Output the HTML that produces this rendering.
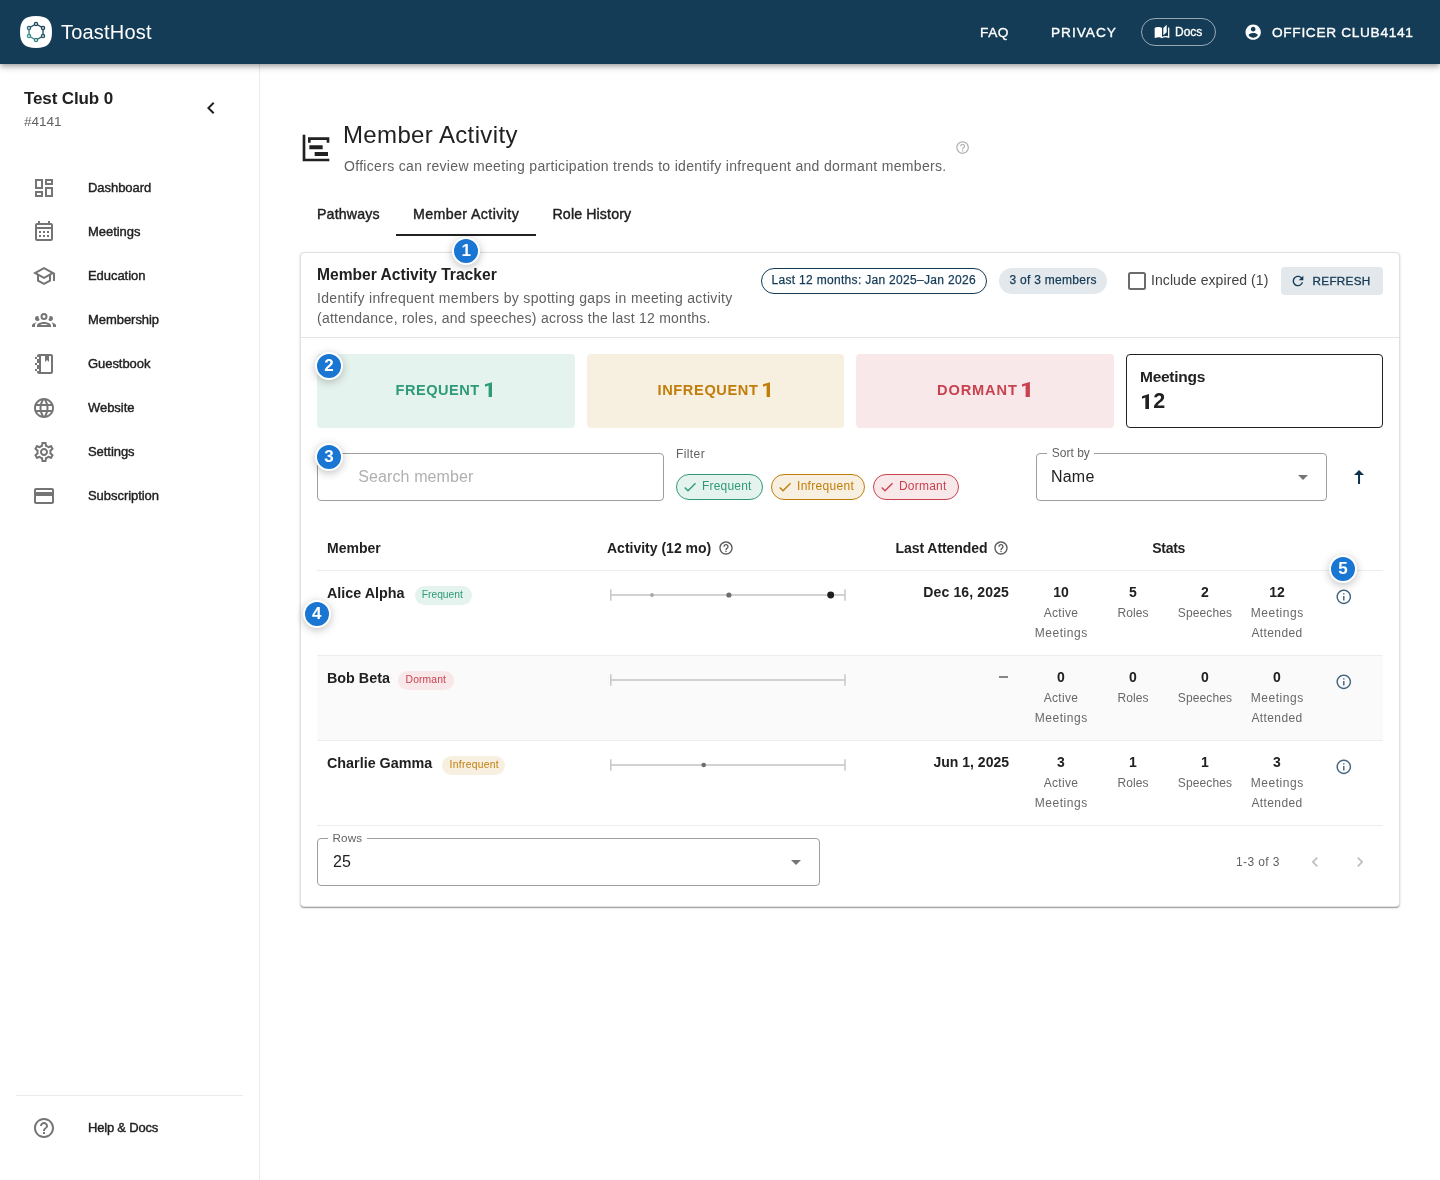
<!DOCTYPE html>
<html lang="en">
<head>
<meta charset="utf-8">
<title>ToastHost - Member Activity</title>
<style>
*{box-sizing:border-box;margin:0;padding:0}
html,body{width:1440px;height:1180px;overflow:hidden;background:#fff}
body{font-family:"Liberation Sans",sans-serif;color:#212121;position:relative;will-change:transform}
.abs{position:absolute;white-space:nowrap}
svg{display:block}
/* header */
#hdr{position:absolute;left:0;top:0;width:1440px;height:64px;background:#153c56;box-shadow:0 2px 4px -1px rgba(0,0,0,.2),0 4px 5px 0 rgba(0,0,0,.14),0 1px 10px 0 rgba(0,0,0,.12);z-index:5}
#logo{position:absolute;left:20px;top:16px;width:32px;height:32px}
#brand{left:61px;top:20px;font-size:20px;line-height:24px;color:#fff;letter-spacing:.2px}
.hnav{color:#fff;font-size:13.7px;line-height:20px;top:22.5px;letter-spacing:1.15px;font-weight:400;-webkit-text-stroke:.35px #fff}
#docs{position:absolute;left:1141px;top:18px;width:75px;height:28px;border:1px solid rgba(255,255,255,.55);border-radius:14px}
/* sidebar */
#side{position:absolute;left:0;top:64px;width:260px;height:1116px;border-right:1px solid #ebebeb;background:#fff}
.nav{position:absolute;left:88px;font-size:13px;line-height:20px;font-weight:400;color:#212121;white-space:nowrap;-webkit-text-stroke:.4px #212121;letter-spacing:-.05px}
.nico{position:absolute;left:32px;width:24px;height:24px;fill:#757575}

/* main */
#title{left:343px;top:120px;font-size:24px;line-height:30px;color:#212121;letter-spacing:.36px}
#sub{left:344px;top:156px;font-size:14px;line-height:20px;color:#616161;letter-spacing:.318px}
.tab{top:204px;font-size:14.2px;line-height:20px;color:#212121;-webkit-text-stroke:.4px #212121}
#card{position:absolute;left:300px;top:252px;width:1100px;height:655px;border:1px solid #e0e0e0;border-radius:4px;background:#fff;box-shadow:0 2px 1px -1px rgba(0,0,0,.2),0 1px 1px 0 rgba(0,0,0,.14),0 1px 3px 0 rgba(0,0,0,.12)}
.badge{position:absolute;width:28px;height:28px;border-radius:50%;background:#1976d2;border:2px solid #fff;box-shadow:0 2px 8px rgba(0,0,0,.25);color:#fff;font-size:17px;font-weight:700;line-height:24.500px;text-align:center;z-index:4}
.chip{position:absolute;white-space:nowrap;border-radius:13px;height:26px;font-size:12px;line-height:23px;text-align:center}

.tile{position:absolute;top:100px;height:74px;border-radius:4px;display:flex;align-items:center;justify-content:center;white-space:nowrap}
.tlab{top:126px;line-height:20px;font-size:14.600px;font-weight:700;letter-spacing:.62px}
.fchip{position:absolute;top:220px;height:26px;border-radius:13px;border:1px solid;font-size:12px;line-height:23px;white-space:nowrap;padding-left:25px;letter-spacing:.2px}
.fchip svg{position:absolute;left:4.600px;top:4px;width:16px;height:16px}
.field{position:absolute;border:1px solid #9e9e9e;border-radius:4px}
.flabel{position:absolute;top:-8px;left:10px;background:#fff;padding:0 4.500px;font-size:12px;line-height:14px;color:#616161;letter-spacing:.13px;white-space:nowrap}
.th{position:absolute;top:285px;font-size:14px;line-height:18px;font-weight:700;color:#212121;white-space:nowrap}
.row{position:absolute;left:16px;width:1066px;height:85px;border-top:1px solid #ededed}
.nm{position:absolute;left:10px;top:13px;font-size:14.350px;line-height:18px;font-weight:700;color:#212121;white-space:nowrap}
.st{position:absolute;height:19.500px;top:14.500px;border-radius:10px;font-size:10.300px;line-height:18.500px;padding:0 0 0 7.200px;white-space:nowrap}
.date{position:absolute;right:374px;top:12.400px;font-size:14px;line-height:18px;font-weight:700;color:#212121;white-space:nowrap}
.sv{position:absolute;top:12.400px;width:80px;text-align:center;font-size:14px;line-height:18px;font-weight:700;color:#212121}
.sl{position:absolute;top:32px;width:80px;text-align:center;font-size:12px;line-height:20px;color:#686868;letter-spacing:.3px}
.info{position:absolute;left:1017.500px;top:17px;width:17.600px;height:17.600px;fill:#456780}
.tl{position:absolute;left:292px;top:17px;width:238px;height:14px}
</style>
</head>
<body>
<!-- HEADER -->
<div id="hdr">
  <svg id="logo" viewBox="0 0 32 32">
    <defs><linearGradient id="lg" gradientUnits="userSpaceOnUse" x1="23" y1="9" x2="9" y2="23"><stop offset="0" stop-color="#173d57"/><stop offset=".55" stop-color="#2a5f6e"/><stop offset="1" stop-color="#3fa396"/></linearGradient></defs>
    <path d="M16 0C27.500 0 32 4.500 32 16S27.500 32 16 32 0 27.500 0 16 4.500 0 16 0Z" fill="#fff"/>
    <g stroke="url(#lg)" stroke-width="1.350" fill="#dfe6e8">
      <path d="M16 8 23 12 23 20 16 24 9 20 9 12Z" fill="none"/>
      <circle cx="16" cy="8" r="1.6"/><circle cx="23" cy="12" r="1.6"/><circle cx="23" cy="20" r="1.6"/><circle cx="16" cy="24" r="1.6"/><circle cx="9" cy="20" r="1.6"/><circle cx="9" cy="12" r="1.6"/>
    </g>
  </svg>
  <div id="brand" class="abs">ToastHost</div>
  <div class="abs hnav" style="left:980px;letter-spacing:.55px">FAQ</div>
  <div class="abs hnav" style="left:1051px;letter-spacing:.97px">PRIVACY</div>
  <div id="docs">
    <svg style="position:absolute;left:12px;top:5.300px;width:16px;height:16px;fill:#fff" viewBox="0 0 24 24"><path d="M19 1l-5 5v11l5-4.500V1zM1 6v14.650c0 .250.250.500.500.500.100 0 .150-.050.250-.050C3.100 20.450 5.050 20 6.500 20c1.950 0 4.050.400 5.500 1.500V6c-1.450-1.100-3.550-1.500-5.500-1.500S2.450 4.900 1 6zm22 13.500V6c-.600-.450-1.250-.750-2-1v13.500c-1.100-.350-2.300-.500-3.500-.500-1.700 0-4.150.650-5.500 1.500v2c1.350-.850 3.800-1.500 5.500-1.500 1.650 0 3.350.300 4.750 1.050.100.050.150.050.250.050.250 0 .500-.250.500-.500v-1.650z"/></svg>
    <div class="abs" style="left:33px;top:5px;font-size:12px;line-height:16px;color:#fff;-webkit-text-stroke:.3px #fff">Docs</div>
  </div>
  <svg style="position:absolute;left:1243.7px;top:22.8px;width:18.4px;height:18.4px;fill:#fff" viewBox="0 0 24 24"><path d="M12 2C6.480 2 2 6.480 2 12s4.480 10 10 10 10-4.480 10-10S17.520 2 12 2zm0 3c1.660 0 3 1.340 3 3s-1.340 3-3 3-3-1.340-3-3 1.340-3 3-3zm0 14.200c-2.500 0-4.710-1.280-6-3.220.030-1.990 4-3.080 6-3.080 1.990 0 5.970 1.090 6 3.080-1.290 1.940-3.500 3.220-6 3.220z"/></svg>
  <div class="abs hnav" style="left:1272px;letter-spacing:.67px">OFFICER CLUB4141</div>
</div>

<!-- SIDEBAR -->
<div id="side">
  <div class="abs" style="left:24px;top:24.500px;font-size:17px;line-height:20px;font-weight:700;color:#212121;letter-spacing:-.12px">Test Club 0</div>
  <div class="abs" style="left:24px;top:48.500px;font-size:13.500px;line-height:18px;color:#616161">#4141</div>
  <svg style="position:absolute;left:199px;top:32px;width:24px;height:24px;fill:#212121" viewBox="0 0 24 24"><path d="M15.410 7.410 14 6l-6 6 6 6 1.410-1.410L10.830 12z"/></svg>
  <svg class="nico" style="top:112px" viewBox="0 0 24 24"><path d="M19 5v2h-4V5h4M9 5v6H5V5h4m10 8v6h-4v-6h4M9 17v2H5v-2h4M21 3h-8v6h8V3zM11 3H3v10h8V3zm10 8h-8v10h8V11zm-10 4H3v6h8v-6z"/></svg>
  <div class="nav" style="top:114px">Dashboard</div>
  <svg class="nico" style="top:155px" viewBox="0 0 24 24"><path d="M19 4h-1V2h-2v2H8V2H6v2H5c-1.110 0-1.990.900-1.990 2L3 20c0 1.100.890 2 2 2h14c1.100 0 2-.900 2-2V6c0-1.100-.900-2-2-2zm0 16H5V10h14v10zm0-12H5V6h14v2zM9 14H7v-2h2v2zm4 0h-2v-2h2v2zm4 0h-2v-2h2v2zm-8 4H7v-2h2v2zm4 0h-2v-2h2v2zm4 0h-2v-2h2v2z"/></svg>
  <div class="nav" style="top:158px">Meetings</div>
  <svg class="nico" style="top:200px" viewBox="0 0 24 24"><path d="M12 3 1 9l4 2.180v6L12 21l7-3.820v-6l2-1.090V17h2V9L12 3zm6.820 6L12 12.720 5.180 9 12 5.280 18.820 9zM17 15.990l-5 2.730-5-2.730v-3.720L12 15l5-2.730v3.720z"/></svg>
  <div class="nav" style="top:202px">Education</div>
  <svg class="nico" style="top:244px" viewBox="0 0 24 24"><path d="M12,5A3.5,3.5 0 0,0 8.5,8.5A3.5,3.5 0 0,0 12,12A3.5,3.5 0 0,0 15.5,8.5A3.5,3.5 0 0,0 12,5M12,7A1.5,1.5 0 0,1 13.5,8.5A1.5,1.5 0 0,1 12,10A1.5,1.5 0 0,1 10.5,8.5A1.5,1.5 0 0,1 12,7M5.5,8A2.5,2.5 0 0,0 3,10.5C3,11.44 3.53,12.25 4.29,12.68C4.65,12.88 5.06,13 5.5,13C5.94,13 6.35,12.88 6.71,12.68C7.08,12.47 7.39,12.17 7.62,11.81C6.89,10.86 6.5,9.7 6.5,8.5C6.5,8.41 6.5,8.31 6.5,8.22C6.2,8.08 5.86,8 5.5,8M18.5,8C18.14,8 17.8,8.08 17.5,8.22C17.5,8.31 17.5,8.41 17.5,8.5C17.5,9.7 17.11,10.86 16.38,11.81C16.5,12 16.63,12.15 16.78,12.3C16.94,12.45 17.1,12.58 17.29,12.68C17.65,12.88 18.06,13 18.5,13C18.94,13 19.35,12.88 19.71,12.68C20.47,12.25 21,11.44 21,10.5A2.5,2.5 0 0,0 18.5,8M12,14C9.66,14 5,15.17 5,17.5V19H19V17.5C19,15.17 14.34,14 12,14M4.71,14.55C2.78,14.78 0,15.76 0,17.5V19H3V17.07C3,16.06 3.69,15.22 4.71,14.55M19.29,14.55C20.31,15.22 21,16.06 21,17.07V19H24V17.5C24,15.76 21.22,14.78 19.29,14.55M12,16C13.53,16 15.24,16.5 16.23,17H7.77C8.76,16.5 10.47,16 12,16Z"/></svg>
  <div class="nav" style="top:246px">Membership</div>
  <svg class="nico" style="top:288px" viewBox="0 0 24 24"><path d="M17,4V10L15,8L13,10V4H9V20H19V4H17M3,7V5H5V4C5,2.890 5.900,2 7,2H19C20.050,2 21,2.950 21,4V20C21,21.050 20.050,22 19,22H7C5.950,22 5,21.050 5,20V19H3V17H5V13H3V11H5V7H3M5,5V7H7V5H5M5,19H7V17H5V19M5,13H7V11H5V13Z"/></svg>
  <div class="nav" style="top:290px">Guestbook</div>
  <svg class="nico" style="top:332px" viewBox="0 0 24 24"><path d="M11.990 2C6.470 2 2 6.480 2 12s4.470 10 9.990 10C17.520 22 22 17.520 22 12S17.520 2 11.990 2zm6.930 6h-2.950c-.320-1.250-.780-2.450-1.380-3.560 1.840.630 3.370 1.910 4.330 3.560zM12 4.040c.830 1.200 1.480 2.530 1.910 3.960h-3.820c.430-1.430 1.080-2.760 1.910-3.960zM4.260 14C4.100 13.360 4 12.690 4 12s.100-1.360.260-2h3.380c-.080.660-.140 1.320-.140 2s.060 1.340.140 2H4.260zm.820 2h2.950c.320 1.250.780 2.450 1.380 3.560-1.840-.630-3.370-1.900-4.330-3.560zm2.950-8H5.080c.960-1.660 2.490-2.930 4.330-3.560C8.810 5.550 8.350 6.750 8.030 8zM12 19.960c-.830-1.200-1.480-2.530-1.910-3.960h3.820c-.430 1.430-1.080 2.760-1.910 3.960zM14.340 14H9.660c-.090-.660-.160-1.320-.160-2s.070-1.350.160-2h4.680c.090.650.160 1.320.160 2s-.070 1.340-.160 2zm.250 5.560c.600-1.110 1.060-2.310 1.380-3.560h2.950c-.960 1.650-2.490 2.930-4.330 3.560zM16.360 14c.080-.660.140-1.320.140-2s-.060-1.340-.140-2h3.380c.160.640.260 1.310.260 2s-.100 1.360-.260 2h-3.380z"/></svg>
  <div class="nav" style="top:334px">Website</div>
  <svg class="nico" style="top:376px" viewBox="0 0 24 24"><path d="M19.430 12.980c.040-.320.070-.640.070-.980 0-.340-.030-.660-.070-.980l2.110-1.650c.190-.150.240-.420.120-.640l-2-3.460c-.090-.160-.260-.250-.440-.250-.060 0-.120.010-.170.030l-2.490 1c-.520-.400-1.080-.730-1.690-.980l-.380-2.650C14.460 2.180 14.250 2 14 2h-4c-.250 0-.460.180-.490.420l-.380 2.650c-.610.250-1.170.590-1.690.980l-2.490-1c-.060-.020-.120-.030-.180-.030-.170 0-.340.090-.430.250l-2 3.460c-.130.220-.070.490.120.640l2.110 1.650c-.040.320-.070.650-.070.980 0 .330.030.660.070.980l-2.110 1.650c-.190.150-.240.420-.120.640l2 3.460c.090.160.260.250.440.250.060 0 .120-.010.170-.030l2.490-1c.520.400 1.080.730 1.690.980l.380 2.650c.030.240.240.420.490.420h4c.250 0 .460-.180.490-.420l.380-2.650c.610-.250 1.170-.590 1.690-.980l2.490 1c.060.020.120.030.180.030.170 0 .340-.090.430-.250l2-3.460c.120-.220.070-.490-.120-.640l-2.110-1.650zm-1.980-1.710c.040.310.050.520.050.730 0 .210-.020.430-.050.730l-.140 1.130.890.700 1.080.840-.700 1.210-1.270-.510-1.040-.420-.900.680c-.430.320-.840.560-1.250.730l-1.060.430-.160 1.130-.200 1.350h-1.400l-.190-1.350-.160-1.130-1.060-.430c-.430-.180-.830-.410-1.230-.710l-.910-.700-1.060.430-1.270.510-.700-1.210 1.080-.840.890-.700-.140-1.130c-.030-.310-.050-.540-.050-.740s.020-.430.050-.730l.140-1.130-.890-.700-1.080-.840.700-1.210 1.270.510 1.040.420.900-.680c.430-.320.840-.560 1.250-.730l1.060-.430.160-1.130.200-1.350h1.390l.190 1.350.160 1.130 1.060.430c.430.180.830.410 1.230.710l.910.700 1.060-.430 1.270-.510.700 1.210-1.070.850-.890.700.140 1.130zM12 8c-2.210 0-4 1.790-4 4s1.790 4 4 4 4-1.790 4-4-1.790-4-4-4zm0 6c-1.100 0-2-.900-2-2s.900-2 2-2 2 .900 2 2-.900 2-2 2z"/></svg>
  <div class="nav" style="top:378px">Settings</div>
  <svg class="nico" style="top:420px" viewBox="0 0 24 24"><path d="M20 4H4c-1.110 0-1.990.890-1.990 2L2 18c0 1.110.890 2 2 2h16c1.110 0 2-.890 2-2V6c0-1.110-.890-2-2-2zm0 14H4v-6h16v6zm0-10H4V6h16v2z"/></svg>
  <div class="nav" style="top:422px">Subscription</div>
  <div style="position:absolute;left:16px;top:1031px;width:227px;height:1px;background:#ebebeb"></div>
  <svg class="nico" style="top:1052px" viewBox="0 0 24 24"><path d="M11 18h2v-2h-2v2zm1-16C6.480 2 2 6.480 2 12s4.480 10 10 10 10-4.480 10-10S17.520 2 12 2zm0 18c-4.410 0-8-3.590-8-8s3.590-8 8-8 8 3.590 8 8-3.590 8-8 8zm0-14c-2.210 0-4 1.790-4 4h2c0-1.100.900-2 2-2s2 .900 2 2c0 2-3 1.750-3 5h2c0-2.250 3-2.500 3-5 0-2.210-1.790-4-4-4z"/></svg>
  <div class="nav" style="top:1054px;letter-spacing:-.2px">Help &amp; Docs</div>
</div>

<!-- MAIN -->
<svg style="position:absolute;left:300px;top:132px;width:32px;height:32px;fill:#212121" viewBox="0 0 24 24"><path d="M2,2H4V20H22V22H2V2M7,10H17V13H7V10M11,15H21V18H11V15M6,4H22V8H20V6H8V8H6V4Z"/></svg>
<div id="title" class="abs">Member Activity</div>
<div id="sub" class="abs">Officers can review meeting participation trends to identify infrequent and dormant members.</div>
<svg style="position:absolute;left:954.900px;top:139.900px;width:15.200px;height:15.200px;fill:#b2b2b2" viewBox="0 0 24 24"><path d="M11 18h2v-2h-2v2zm1-16C6.480 2 2 6.480 2 12s4.480 10 10 10 10-4.480 10-10S17.520 2 12 2zm0 18c-4.410 0-8-3.590-8-8s3.590-8 8-8 8 3.590 8 8-3.590 8-8 8zm0-14c-2.210 0-4 1.790-4 4h2c0-1.100.900-2 2-2s2 .900 2 2c0 2-3 1.750-3 5h2c0-2.250 3-2.500 3-5 0-2.210-1.790-4-4-4z"/></svg>
<div class="abs tab" style="left:317px;letter-spacing:.15px">Pathways</div>
<div class="abs tab" style="left:413px;letter-spacing:.4px">Member Activity</div>
<div class="abs tab" style="left:552.500px;letter-spacing:.12px">Role History</div>
<div style="position:absolute;left:396px;top:234px;width:140px;height:2px;background:#212121"></div>

<div id="card"><div style="position:absolute;left:0;top:1px;width:1098px;height:652px">
  <div class="abs" style="left:16px;top:10px;font-size:15.6px;line-height:22px;font-weight:700;color:#212121;letter-spacing:0px">Member Activity Tracker</div>
  <div class="abs" style="left:16px;top:34px;font-size:14px;line-height:20px;color:#616161;letter-spacing:.33px">Identify infrequent members by spotting gaps in meeting activity<br><span style="letter-spacing:.245px">(attendance, roles, and speeches) across the last 12 months.</span></div>
  <div style="position:absolute;left:0;top:83px;width:1098px;height:1px;background:#e4e4e4"></div>

  <!-- header chips -->
  <div class="chip" style="left:460px;top:14px;width:226px;border:1px solid #153b56;color:#153b56;background:#fff;text-align:left;padding-left:9.500px;letter-spacing:.31px;-webkit-text-stroke:.25px #153b56">Last 12 months: Jan 2025–Jan 2026</div>
  <div class="chip" style="left:698px;top:14px;width:108px;background:#e3e8ec;color:#153b56;line-height:25px;text-align:left;padding-left:10.500px;letter-spacing:.28px;-webkit-text-stroke:.25px #153b56">3 of 3 members</div>
  <div style="position:absolute;left:827px;top:18px;width:18px;height:18px;border:2px solid #6b6b6b;border-radius:2.500px"></div>
  <div class="abs" style="left:850px;top:16px;font-size:14px;line-height:20px;color:#424242;letter-spacing:.08px">Include expired (1)</div>
  <div style="position:absolute;left:980px;top:13px;width:102px;height:28px;border-radius:4px;background:#e3e8ec"></div>
  <svg style="position:absolute;left:988.600px;top:18.700px;width:16px;height:16px;fill:#153b56" viewBox="0 0 24 24"><path d="M17.650 6.350C16.200 4.900 14.210 4 12 4c-4.420 0-7.990 3.580-7.990 8s3.570 8 7.990 8c3.730 0 6.840-2.550 7.730-6h-2.080c-.820 2.330-3.040 4-5.650 4-3.310 0-6-2.690-6-6s2.690-6 6-6c1.660 0 3.140.690 4.220 1.780L13 11h7V4l-2.350 2.350z"/></svg>
  <div class="abs" style="left:1011.500px;top:17px;font-size:11.7px;line-height:20px;color:#153b56;letter-spacing:.32px;-webkit-text-stroke:.35px #153b56">REFRESH</div>
  <!-- tiles -->
  <div class="tile" style="left:16px;width:258px;background:#e5f3ee"></div><div class="abs tlab" style="left:94.600px;color:#2e9a78;letter-spacing:.48px">FREQUENT</div><svg style="position:absolute;left:183.500px;top:127.600px;width:7.900px;height:15.200px" viewBox="0 0 634 1456" preserveAspectRatio="none"><path d="M634 1456H290V342L0 449V214L603 0H634Z" fill="#2e9a78"/></svg>
  <div class="tile" style="left:286px;width:257px;background:#f7f0e1"></div><div class="abs tlab" style="left:356.500px;color:#c17d0a">INFREQUENT</div><svg style="position:absolute;left:461.500px;top:127.600px;width:7.900px;height:15.200px" viewBox="0 0 634 1456" preserveAspectRatio="none"><path d="M634 1456H290V342L0 449V214L603 0H634Z" fill="#c17d0a"/></svg>
  <div class="tile" style="left:555px;width:258px;background:#f9e8ea"></div><div class="abs tlab" style="left:636px;color:#c9424f;letter-spacing:.87px">DORMANT</div><svg style="position:absolute;left:721.200px;top:127.600px;width:7.900px;height:15.200px" viewBox="0 0 634 1456" preserveAspectRatio="none"><path d="M634 1456H290V342L0 449V214L603 0H634Z" fill="#c9424f"/></svg>
  <div class="tile" style="left:825px;width:257px;border:1px solid #212121;background:#fff"></div>
  <div class="abs" style="left:839px;top:114px;font-size:15.500px;line-height:18px;font-weight:700;color:#212121;letter-spacing:-.27px">Meetings</div>
  <svg style="position:absolute;left:841px;top:139.7px;width:7.3px;height:15.2px" viewBox="0 0 634 1456" preserveAspectRatio="none"><path d="M634 1456H290V342L0 449V214L603 0H634Z" fill="#212121"/></svg><div class="abs" style="left:852.300px;top:133.500px;font-size:21.500px;line-height:26px;font-weight:700;color:#212121">2</div>
  <!-- search / filter / sort -->
  <div class="field" style="left:16px;top:199px;width:347px;height:48px"></div>
  <div class="abs" style="left:57.300px;top:211px;font-size:16px;line-height:24px;color:#b0b0b0;letter-spacing:.1px">Search member</div>
  <div class="abs" style="left:375px;top:192px;font-size:12px;line-height:16px;color:#616161;letter-spacing:.4px">Filter</div>
  <div class="fchip" style="left:375px;width:87px;border-color:#2e9a78;background:#e5f3ee;color:#2e9a78"><svg viewBox="0 0 24 24" fill="#2e9a78"><path d="M9 16.170 4.830 12l-1.420 1.410L9 19 21 7l-1.410-1.410z"/></svg>Frequent</div>
  <div class="fchip" style="left:470px;width:94px;border-color:#c17d0a;background:#f7f0e1;color:#c17d0a;letter-spacing:.3px"><svg viewBox="0 0 24 24" fill="#c17d0a"><path d="M9 16.170 4.830 12l-1.420 1.410L9 19 21 7l-1.410-1.410z"/></svg>Infrequent</div>
  <div class="fchip" style="left:572px;width:86px;border-color:#c9424f;background:#f9e8ea;color:#c9424f"><svg viewBox="0 0 24 24" fill="#c9424f"><path d="M9 16.170 4.830 12l-1.420 1.410L9 19 21 7l-1.410-1.410z"/></svg>Dormant</div>
  <div class="field" style="left:735px;top:199px;width:291px;height:48px"><div class="flabel" style="left:10.300px;letter-spacing:0">Sort by</div></div>
  <div class="abs" style="left:750px;top:211px;font-size:16px;line-height:24px;color:#212121;letter-spacing:.2px">Name</div>
  <svg style="position:absolute;left:990px;top:211px;width:24px;height:24px;fill:#757575" viewBox="0 0 24 24"><path d="m7 10 5 5 5-5z"/></svg>
  <svg style="position:absolute;left:1046px;top:211px;width:24px;height:24px;fill:#0f3450" viewBox="0 0 24 24"><path d="M7.030 9.970H11.030V18.890L13.040 18.920V9.970H17.030L12.030 4.970Z"/></svg>
  <!-- table head -->
  <div class="th" style="left:26px">Member</div>
  <div class="th" style="left:306px">Activity (12 mo)</div>
  <svg style="position:absolute;left:417.250px;top:285.700px;width:16px;height:16px;fill:#595959" viewBox="0 0 24 24"><path d="M11 18h2v-2h-2v2zm1-16C6.480 2 2 6.480 2 12s4.480 10 10 10 10-4.480 10-10S17.520 2 12 2zm0 18c-4.410 0-8-3.590-8-8s3.590-8 8-8 8 3.590 8 8-3.590 8-8 8zm0-14c-2.210 0-4 1.790-4 4h2c0-1.100.900-2 2-2s2 .900 2 2c0 2-3 1.750-3 5h2c0-2.250 3-2.500 3-5 0-2.210-1.790-4-4-4z"/></svg>
  <div class="th" style="left:594.600px;letter-spacing:-.08px">Last Attended</div>
  <svg style="position:absolute;left:692.250px;top:285.700px;width:16px;height:16px;fill:#595959" viewBox="0 0 24 24"><path d="M11 18h2v-2h-2v2zm1-16C6.480 2 2 6.480 2 12s4.480 10 10 10 10-4.480 10-10S17.520 2 12 2zm0 18c-4.410 0-8-3.590-8-8s3.590-8 8-8 8 3.590 8 8-3.590 8-8 8zm0-14c-2.210 0-4 1.790-4 4h2c0-1.100.900-2 2-2s2 .900 2 2c0 2-3 1.750-3 5h2c0-2.250 3-2.500 3-5 0-2.210-1.790-4-4-4z"/></svg>
  <div class="th" style="left:851.300px;letter-spacing:-.3px">Stats</div>
  <div class="row" style="top:316px;"><div class="nm">Alice Alpha</div><div class="st" style="left:97.500px;width:57px;background:#e5f3ee;color:#2e9a78;letter-spacing:0">Frequent</div><svg class="tl" viewBox="0 0 238 14"><path d="M1.800 1.200v11.600M236 1.200v11.600M1.800 7h234.200" stroke="#c4c4c4" stroke-width="1.400" fill="none"/><circle cx="43" cy="7" r="1.900" fill="#a8a8a8"/><circle cx="119.900" cy="7" r="2.600" fill="#6e6e6e"/><circle cx="221.700" cy="7" r="3.450" fill="#1e1e1e"/></svg><div class="date" style="letter-spacing:.14px">Dec 16, 2025</div><div class="sv" style="left:704px">10</div><div class="sl" style="left:704px">Active<br><span style="letter-spacing:.55px;margin-left:.4px">Meetings</span></div><div class="sv" style="left:776px">5</div><div class="sl" style="left:776px;letter-spacing:.05px">Roles</div><div class="sv" style="left:848px">2</div><div class="sl" style="left:848px;letter-spacing:.12px">Speeches</div><div class="sv" style="left:920px">12</div><div class="sl" style="left:920px"><span style="letter-spacing:.55px;margin-left:.4px">Meetings</span><br><span style="letter-spacing:.4px">Attended</span></div><svg class="info" viewBox="0 0 24 24"><path d="M11 7h2v2h-2zm0 4h2v6h-2zm1-9C6.480 2 2 6.480 2 12s4.480 10 10 10 10-4.480 10-10S17.520 2 12 2zm0 18c-4.410 0-8-3.590-8-8s3.590-8 8-8 8 3.590 8 8-3.590 8-8 8z"/></svg></div>
  <div class="row" style="top:401px;background:#fafafa;"><div class="nm">Bob Beta</div><div class="st" style="left:81.400px;width:55.200px;background:#f9e8ea;color:#c9424f;letter-spacing:.14px">Dormant</div><svg class="tl" viewBox="0 0 238 14"><path d="M1.800 1.200v11.600M236 1.200v11.600M1.800 7h234.200" stroke="#c4c4c4" stroke-width="1.400" fill="none"/></svg><div style="position:absolute;left:682px;top:20.200px;width:9px;height:1.600px;background:#858585"></div><div class="sv" style="left:704px">0</div><div class="sl" style="left:704px">Active<br><span style="letter-spacing:.55px;margin-left:.4px">Meetings</span></div><div class="sv" style="left:776px">0</div><div class="sl" style="left:776px;letter-spacing:.05px">Roles</div><div class="sv" style="left:848px">0</div><div class="sl" style="left:848px;letter-spacing:.12px">Speeches</div><div class="sv" style="left:920px">0</div><div class="sl" style="left:920px"><span style="letter-spacing:.55px;margin-left:.4px">Meetings</span><br><span style="letter-spacing:.4px">Attended</span></div><svg class="info" viewBox="0 0 24 24"><path d="M11 7h2v2h-2zm0 4h2v6h-2zm1-9C6.480 2 2 6.480 2 12s4.480 10 10 10 10-4.480 10-10S17.520 2 12 2zm0 18c-4.410 0-8-3.590-8-8s3.590-8 8-8 8 3.590 8 8-3.590 8-8 8z"/></svg></div>
  <div class="row" style="top:486px;"><div class="nm">Charlie Gamma</div><div class="st" style="left:125.400px;width:63px;background:#f7f0e1;color:#c17d0a;letter-spacing:.3px">Infrequent</div><svg class="tl" viewBox="0 0 238 14"><path d="M1.800 1.200v11.600M236 1.200v11.600M1.800 7h234.200" stroke="#c4c4c4" stroke-width="1.400" fill="none"/><circle cx="94.700" cy="7" r="2.300" fill="#6e6e6e"/></svg><div class="date">Jun 1, 2025</div><div class="sv" style="left:704px">3</div><div class="sl" style="left:704px">Active<br><span style="letter-spacing:.55px;margin-left:.4px">Meetings</span></div><div class="sv" style="left:776px">1</div><div class="sl" style="left:776px;letter-spacing:.05px">Roles</div><div class="sv" style="left:848px">1</div><div class="sl" style="left:848px;letter-spacing:.12px">Speeches</div><div class="sv" style="left:920px">3</div><div class="sl" style="left:920px"><span style="letter-spacing:.55px;margin-left:.4px">Meetings</span><br><span style="letter-spacing:.4px">Attended</span></div><svg class="info" viewBox="0 0 24 24"><path d="M11 7h2v2h-2zm0 4h2v6h-2zm1-9C6.480 2 2 6.480 2 12s4.480 10 10 10 10-4.480 10-10S17.520 2 12 2zm0 18c-4.410 0-8-3.590-8-8s3.590-8 8-8 8 3.590 8 8-3.590 8-8 8z"/></svg></div>
  <div style="position:absolute;left:16px;top:571px;width:1066px;height:1px;background:#ededed"></div>
  <!-- pagination -->
  <div class="field" style="left:16px;top:584px;width:503px;height:48px"><div class="flabel" style="left:10px;font-size:11.700px">Rows</div></div>
  <div class="abs" style="left:32px;top:595.500px;font-size:16px;line-height:24px;color:#212121;letter-spacing:.2px">25</div>
  <svg style="position:absolute;left:483px;top:596px;width:24px;height:24px;fill:#757575" viewBox="0 0 24 24"><path d="m7 10 5 5 5-5z"/></svg>
  <div class="abs" style="left:935px;top:598px;font-size:12px;line-height:20px;color:#616161;letter-spacing:.4px">1-3 of 3</div>
  <svg style="position:absolute;left:1004px;top:598px;width:20px;height:20px;fill:#bdbdbd" viewBox="0 0 24 24"><path d="M15.410 7.410 14 6l-6 6 6 6 1.410-1.410L10.830 12z"/></svg>
  <svg style="position:absolute;left:1049px;top:598px;width:20px;height:20px;fill:#bdbdbd" viewBox="0 0 24 24"><path d="M10 6 8.590 7.410 13.170 12l-4.580 4.590L10 18l6-6z"/></svg>
</div></div>
<div class="badge" style="left:452.250px;top:236.500px">1</div>
<div class="badge" style="left:315px;top:352px">2</div>
<div class="badge" style="left:315px;top:442.500px">3</div>
<div class="badge" style="left:302.750px;top:599.500px">4</div>
<div class="badge" style="left:1329px;top:554.800px">5</div>
</body>
</html>
